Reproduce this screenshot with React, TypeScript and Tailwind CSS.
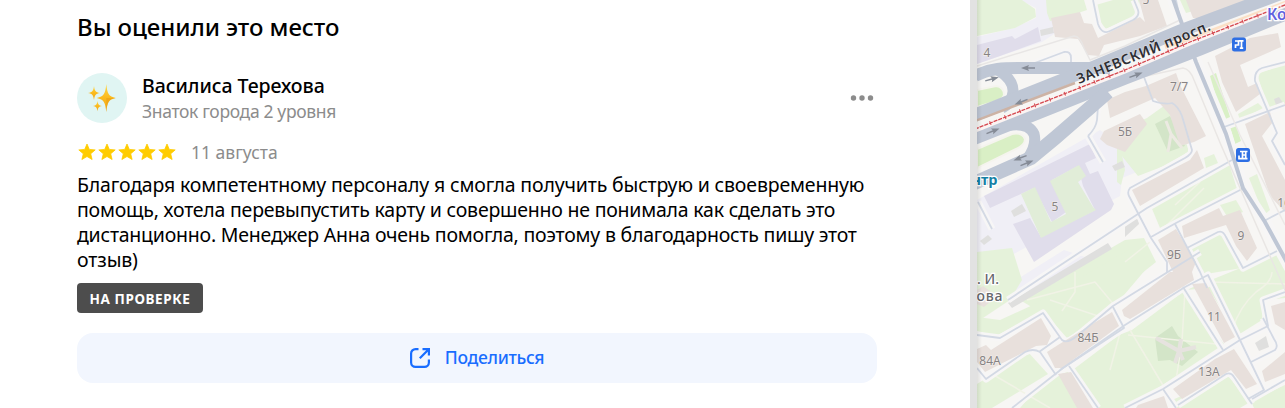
const REVIEW_LINES = [
  { text: "Благодаря компетентному персоналу я смогла получить быструю и своевременную", cls: "tracking-[-0.16px]" },
  { text: "помощь, хотела перевыпустить карту и совершенно не понимала как сделать это", cls: "tracking-[-0.22px]" },
  { text: "дистанционно. Менеджер Анна очень помогла, поэтому в благодарность пишу этот", cls: "tracking-[-0.22px]" },
  { text: "отзыв)", cls: "tracking-[-0.1px]" },
];

const PARKS = [
  // north
  "977,0 1022,0 1035,9 1036,17 1015,28 977,36",
  "1046,0 1084,0 1087,10 1066,17 1050,21 1047,13",
  "1096,5 1113,0 1140,0 1138,14 1106,29 1099,20",
  "1125,23 1138,15 1132,0 1118,0",
  "1180,0 1194,0 1197,10 1186,13",
  "1147,118 1168,103 1188,136 1188,152 1164,166 1138,176 1117,150 1125,128",
  "1257,74 1285,64 1285,104 1270,115",
  "1238,114 1258,103 1263,108 1240,120",
  // middle
  "1150,204 1232,163 1242,187 1160,228",
  "1249,178 1257,174 1270,210 1264,215",
  "1220,205 1236,200 1243,212 1228,218",
  "1204,158 1214,154 1218,163 1206,168",
  "1117,130 1125,170 1121,185 1117,182",
  "1125,240 1144,238 1156,262 1112,297 1080,312 1050,318 1020,300",
  "1188,248 1221,232 1242,268 1200,275",
  "1000,320 1035,304 1130,249 1152,262 1113,308 1067,338 1043,311 996,336 977,331 977,317",
  // south
  "977,252 1012,248 1022,280 1010,300 977,322",
  "977,384 1028,352 1048,374 992,408 977,408",
  "1070,372 1119,335 1132,330 1183,292 1224,344 1158,388 1125,408 1095,408",
  "1186,290 1206,282 1285,250 1285,298 1264,300 1262,320 1238,335 1208,288",
  "1080,408 1068,372 1046,378 1020,408",
  "1172,400 1228,376 1250,402 1240,408 1177,408",
  "1251,401 1285,385 1285,408 1254,408",
];

const BRIGHT_LAWNS = [
  "1210,76 1216,73 1230,117 1223,120",
  "1230,127 1236,125 1241,141 1235,144",
];

const LAVENDER = [
  "977,37 1014,28 1036,18 1036,8 1020,0 1048,0 1052,18 1060,30 1042,42 977,64",
  "977,200 1100,130 1125,150 1120,196 1010,256 977,262",
  "1120,142 1140,128 1152,166 1122,178",
  "1008,285 1064,250 1100,262 1012,306",
];

const SCHOOLS = [
  "977,45 1012,36 1015,39 1038,27 1041,41 1000,56 977,64",
  "984,196 1090,144 1096,158 1085,163 1090,174 1098,171 1114,204 1111,210 1034,262 1013,224 1030,218 1041,237 1095,210 1083,186 1078,166 1052,180 1066,212 1052,222 1034,188 990,208",
];

const COURTYARDS = ["1021,194 1035,187 1051,222 1066,214 1050,181 1079,165 1086,176 1078,182 1093,207 1096,210 1041,238"];

const BUILDINGS = [
  "1051,18 1080,12 1084,23 1092,24 1098,38 1140,17 1145,22 1139,0 1158,0 1167,26 1140,36 1104,45 1099,56 1088,55 1078,39 1055,37",
  "1186,0 1254,0 1201,18 1193,18",
  "1125,92 1146,86 1176,73 1181,87 1206,136 1194,142 1180,146 1170,115 1155,98 1110,118 1107,100",
  "1215,56 1250,38 1278,33 1281,47 1240,65 1248,87 1257,83 1260,94 1236,112 1222,82",
  "1245,124 1270,112 1273,122 1262,136 1285,180 1285,212 1270,196",
  "1107,145 1100,139 1104,131 1140,114 1147,124 1125,152",
  "1132,190 1190,160 1197,150 1204,168 1140,206",
  "1182,226 1219,208 1223,216 1240,210 1257,248 1247,261 1236,246 1226,225 1184,238",
  "1158,240 1176,229 1196,262 1192,272 1173,272",
  "977,290 983,286 997,296 984,307 977,304",
  "977,349 986,345 991,350 1041,318 1051,336 1047,345 1036,346 985,372 977,362",
  "1047,352 1058,345 1112,312 1119,326 1062,368 1055,368",
  "1122,310 1170,272 1192,272 1194,280 1130,319 1124,316",
  "1058,374 1071,372 1093,408 1077,408",
  "1192,284 1206,283 1235,337 1224,343",
  "1173,389 1215,359 1234,349 1257,384 1246,389 1231,370 1182,399",
  "1271,306 1285,302 1285,330 1275,324",
  "1262,371 1285,352 1285,374 1265,382",
  "1138,405 1164,396 1168,408 1136,408",
];

const GREY_BLOCKS = [
  "1040,30 1053,27 1054,33 1041,36",
  "1011,211 1022,204 1026,211 1014,217",
  "980,241 988,235 992,239 984,245",
  "1112,166 1122,161 1125,167 1115,171",
  "1008,303 1108,243 1112,249 1012,308",
  "1255,343 1266,336 1269,347 1259,351",
  "1125,222 1137,214 1139,224 1125,237",
  "1274,99 1279,97 1283,103 1276,105",
];

const DARK_GREEN = [
  "1155,338 1172,326 1178,336 1198,352 1182,366 1170,360 1158,361",
  "1155,124 1170,116 1185,146 1168,152",
];

// narrow service roads between the blocks
const LANES = [
  "M1093 0L1098 24Q1102 35 1110 31L1133 20Q1140 16 1138 10L1134 0",
  "M1032 64L1064 52Q1071 51 1071 58V68",
  "M1144 77L1153 101Q1165 105 1172 103Q1178 106 1182 116L1192 150Q1192 154 1185 158L1130 188Q1127 192 1129 196L1151 238L1167 262V272",
  "M1088 136L1103 162",
  "M1232 160L1147 208L1050 272L1008 300",
  "M1244 188L1176 223L1151 237",
  "M1175 224L1200 272L1207 288",
  "M1187 248L1218 232Q1223 230 1226 237L1243 268L1277 251",
  "M1264 221L1285 210",
  "M1285 62L1262 68Q1254 71 1255 81L1277 133L1272 141L1285 165",
  "M1224 127L1285 105",
  "M978 202L992 229",
  "M977 335L1000 338L1043 313L1062 340Q1067 344 1077 336L1113 306L1200 252",
  "M1113 307L1124 328L1063 368L1012 408",
  "M977 368L986 379L1025 352Q1033 348 1040 352L1056 375",
  "M1039 352L1060 337",
  "M1069 366L1098 408",
  "M1060 370L1125 325L1185 287L1208 275L1240 340",
  "M1183 287L1223 350",
  "M1125 408L1163 389L1240 340L1268 326L1263 300L1285 292",
  "M1163 389L1176 408",
  "M1178 405L1226 374Q1231 372 1234 377L1252 404",
  "M1240 340L1264 390L1248 399",
  "M1252 399L1285 380",
  "M1251 362L1275 350Q1279 346 1274 339L1263 318",
  "M1183 33L1176 0",
  "M1108 95L1098 106L1097 120Q1096 128 1088 136",
];

const FOOTPATHS = [
  "M1204 188L1160 232",
  "M1175 205L1200 182",
  "M1125 325L1050 300",
  "M1062 311L1075 292V272",
  "M1027 300L1095 282L1115 306",
  "M1110 370L1120 333",
  "M992 374L1050 408",
  "M1130 330L1167 392",
  "M1185 290L1182 342L1176 380",
  "M1128 335L1216 344",
  "M1210 282L1285 284",
  "M1232 330Q1240 306 1256 292Q1272 282 1272 272",
  "M1125 262L1155 238",
  "M1204 90L1224 130",
];

const ARROWS = [
  { x: 1028, y: 68, r: 180 },
  { x: 992, y: 79, r: -15 },
  { x: 1021, y: 102, r: 158 },
  { x: 993, y: 131, r: -22 },
  { x: 1020, y: 158, r: 160 },
  { x: 1027, y: 163, r: -22 },
  { x: 1136, y: 75, r: -20 },
];

const HOUSES = [
  { x: 987, y: 57, n: "4" },
  { x: 1146, y: 4, n: "5" },
  { x: 1179, y: 91, n: "7/7" },
  { x: 1125, y: 136, n: "5Б" },
  { x: 1055, y: 211, n: "5" },
  { x: 1284, y: 207, n: "16" },
  { x: 1241, y: 240, n: "9" },
  { x: 1174, y: 259, n: "9Б" },
  { x: 1214, y: 321, n: "11" },
  { x: 1088, y: 342, n: "84Б" },
  { x: 990, y: 365, n: "84А" },
  { x: 1209, y: 376, n: "13А" },
];

function Polys({ items, fill }: { items: string[]; fill: string }) {
  return (
    <g fill={fill}>
      {items.map((p) => (
        <polygon key={p} points={p} />
      ))}
    </g>
  );
}

function Stop({ x, y, d }: { x: number; y: number; d: string }) {
  return (
    <g transform={`translate(${x} ${y})`}>
      <rect width="14" height="14" rx="2.5" fill="#2e6fe4" />
      <path d={d} fill="none" stroke="#fff" strokeWidth="1.7" />
    </g>
  );
}

function CityMap() {
  return (
    <svg className="block h-full w-full" viewBox="977 0 308 408" fontFamily='"Noto Sans", sans-serif'>
      <defs>
        <linearGradient id="edge">
          <stop offset="0" stopColor="#000" stopOpacity=".09" />
          <stop offset="1" stopColor="#000" stopOpacity="0" />
        </linearGradient>
      </defs>
      <rect x="977" width="308" height="408" fill="#f7f6f4" />
      <Polys items={LAVENDER} fill="#f0eff6" />
      <Polys items={PARKS} fill="#e5f2da" />
      <Polys items={BRIGHT_LAWNS} fill="#d9f0c6" />
      <Polys items={DARK_GREEN} fill="#d3e5c8" />
      <Polys items={GREY_BLOCKS} fill="#dfdfde" />
      <Polys items={SCHOOLS} fill="#e0ddeb" />
      <Polys items={COURTYARDS} fill="#e1edd8" />

      <g fill="none" strokeLinejoin="round">
        {FOOTPATHS.map((d) => (
          <path key={d} d={d} stroke="#f1f3e6" strokeWidth="1.5" />
        ))}
        {LANES.map((d) => (
          <path key={d} d={d} stroke="#f7f6f6" strokeWidth="7" />
        ))}
        <path d="M1172 -4L1187 38L1196 62L1226 134L1243 188L1265 222L1290 268" stroke="#f7f6f6" strokeWidth="12" />
      </g>
      <Polys items={BUILDINGS} fill="#e8e0dc" />
      <g fill="none" strokeLinejoin="round">
        {LANES.map((d) => (
          <path key={d} d={d} stroke="#d3d9e4" strokeWidth="1.8" />
        ))}
        <path d="M977 66L1074 36Q1080 36 1084 48L1090 60L1125 46L1180 20" stroke="#e8e6e5" strokeWidth="1.5" />
        <path d="M1137 78L1183 68Q1190 69 1194 80L1221 145L1285 290" stroke="#e9e6e4" strokeWidth="1.5" />
        <path d="M1208 62L1240 135L1285 225" stroke="#ece9e7" strokeWidth="1.5" />
        <path d="M1156 338L1179 351L1196 347M1181 339L1179 351L1183 360M1179 351L1175 363" stroke="#e6e3df" strokeWidth="4" />
        <path d="M1166 121L1171 134L1168 152M1171 134L1182 148" stroke="#eceae2" strokeWidth="3" />
      </g>

      {/* lawns inside the turning loops */}
      <path d="M977 90L996 86Q1004 87 1004 95Q1002 100 994 102L977 107Z" fill="#d9efc5" stroke="#f5f4ee" strokeWidth="2" />
      <path d="M977 149L1012 134Q1022 132 1025 139Q1025 145 1016 149L977 168Z" fill="#d9efc5" stroke="#f5f4ee" strokeWidth="2" />

      <g fill="none" stroke="#bfc7d5">
        <path d="M1172 -4L1187 38L1196 62L1226 134L1243 188L1265 222L1290 268" strokeWidth="4" />
        <path d="M975 76C990 68 1005 68 1020 68H1110" strokeWidth="12" />
        <path d="M998 70Q1014 80 1013 92Q1012 103 1002 108" strokeWidth="11" />
        <path d="M970 117L1075 75L1180 31L1290 -10" strokeWidth="13" />
        <path d="M970 139L1125 77L1200 48L1290 11" strokeWidth="15" />
        <path d="M1000 127Q1028 120 1034 134Q1037 145 1028 158" strokeWidth="11" />
        <path d="M970 185L1031 158L1055 138L1108 92" strokeWidth="14" />
      </g>
      <path d="M975 121L1075 83" stroke="#cdb3a5" strokeWidth="2.5" />
      <path d="M1165 47L1195 37L1290 1" stroke="#fbe0c6" strokeWidth="4" fill="none" />
      <path d="M975 130L1125 71L1190 43L1290 3" stroke="#fbf4f3" strokeWidth="5" fill="none" />
      <path d="M975 129L1125 70L1190 42L1290 3" stroke="#d5484f" strokeWidth="1.3" strokeDasharray="4 1" fill="none" />
      <path d="M975 129L1125 70L1190 42L1290 3" stroke="#d5484f" strokeWidth="4" strokeDasharray="1 15" fill="none" />

      {ARROWS.map((a) => (
        <path
          key={`${a.x}-${a.y}`}
          transform={`translate(${a.x} ${a.y}) rotate(${a.r})`}
          d="M-7 -.7H0L-1 -3L7 0L-1 3L0 .7H-7Z"
          fill="#858b96"
        />
      ))}

      <g fontSize="12" fill="#878384" stroke="#f3efec" strokeWidth="1.2" paintOrder="stroke" textAnchor="middle">
        {HOUSES.map((h) => (
          <text key={`${h.x}-${h.y}`} x={h.x} y={h.y}>
            {h.n}
          </text>
        ))}
      </g>
      <text
        transform="translate(1079 84) rotate(-22.3)"
        fontSize="14"
        fontWeight="600"
        textLength="143"
        fill="#2e2e33"
        stroke="#fff"
        strokeOpacity=".4"
        strokeWidth="1.2"
        paintOrder="stroke"
      >
        ЗАНЕВСКИЙ просп.
      </text>
      <g paintOrder="stroke" stroke="#fff" strokeWidth="2.5">
        <text x="1267" y="19.5" fontSize="15.5" fontWeight="600" fill="#5f62df">
          Ко
        </text>
        <text x="997.5" y="185" fontSize="14.5" fontWeight="700" fill="#1580a5" textAnchor="end">
          нтр
        </text>
        <g fontSize="14" fontWeight="500" fill="#66676b">
          <text x="977" y="284">. И.</text>
          <text x="976.5" y="300.500" textLength="26">ова</text>
        </g>
      </g>

      <Stop x={1232} y={37.5} d="M3 3.500H6.500V7.500H3.500V10.500M6.500 3.300H11.500M9.500 3.300V10.700M7.800 10.700H11.200" />
      <Stop x={1236} y={148} d="M4 3.500H11.500M6.500 7H9.500M3 7.500V10.700H11.500M6.500 3.500V10.500M9.700 3.500V10.500" />
      <rect x="977" width="5" height="408" fill="url(#edge)" />
    </svg>
  );
}

function Sparkles() {
  return (
    <svg className="size-[30px]" viewBox="0 0 30 30">
      <defs>
        <linearGradient id="gold" x1="0" y1="0" x2="0" y2="1">
          <stop offset="0" stopColor="#ffd84a" />
          <stop offset=".5" stopColor="#fbb91d" />
          <stop offset="1" stopColor="#eea81a" />
        </linearGradient>
      </defs>
      <g fill="url(#gold)">
        <path d="M19.300 1C20.300 10.500 21.500 13.500 28.800 15C21.500 16.500 20.300 19.500 19.300 29C18.300 19.500 17 16.500 9.800 15C17 13.500 18.300 10.500 19.300 1Z" />
        <path d="M7 3C7.600 7.700 8.500 9.200 13 10C8.500 10.800 7.600 12.300 7 17C6.400 12.300 5.500 10.800 1 10C5.500 9.200 6.400 7.700 7 3Z" />
        <path d="M10.500 17.700C11 21.200 11.700 22.500 15 23C11.700 23.500 11 24.800 10.500 28.300C10 24.800 9.300 23.500 6 23C9.300 22.500 10 21.200 10.500 17.700Z" />
      </g>
      <path d="M19.300 15L28.500 15C22 16 20.500 18 19.300 29Z" fill="#e89a12" opacity=".55" />
    </svg>
  );
}

function Star() {
  return (
    <svg className="size-5" viewBox="0 0 20 20">
      <path
        d="M10 2L12.300 7.400L18.200 7.900L13.700 11.800L15.100 17.500L10 14.500L4.900 17.500L6.300 11.800L1.800 7.900L7.700 7.400Z"
        fill="#fc0"
        stroke="#fc0"
        strokeWidth=".8"
        strokeLinejoin="round"
      />
    </svg>
  );
}

export default function App() {
  return (
    <main className="flex h-[408px] w-[1285px] overflow-hidden bg-white font-['Noto_Sans',sans-serif] text-black">
      <section className="w-[970px] shrink-0 pt-[11px] pl-[77px]">
        <div className="w-[800px]">
          <h2 className="mb-[30px] text-2xl leading-8 font-medium tracking-[-0.07px]">Вы оценили это место</h2>

          <div className="flex h-[50px] items-center">
            <div className="flex size-[50px] items-center justify-center rounded-full bg-[#e0f5f3]">
              <Sparkles />
            </div>
            <div className="ml-[15px] flex-1 self-start leading-[26px] whitespace-nowrap">
              <div className="text-[19.5px] font-medium tracking-[-0.06px]">Василиса Терехова</div>
              <div className="-mt-px text-[17.5px] tracking-[-0.34px] text-[#8c8c8c]">Знаток города 2 уровня</div>
            </div>
            <button className="mr-0.5 p-0">
              <svg className="h-6 w-[26px]" viewBox="0 0 26 24" fill="#8c8c8c">
                <circle cx="4.5" cy="12" r="2.7" />
                <circle cx="13" cy="12" r="2.7" />
                <circle cx="21.5" cy="12" r="2.7" />
              </svg>
            </button>
          </div>

          <div className="mt-[17px] flex h-6 items-center">
            <div className="flex">
              {[1, 2, 3, 4, 5].map((n) => (
                <Star key={n} />
              ))}
            </div>
            <span className="ml-3.5 text-[17.5px] leading-6 text-[#8c8c8c]">11 августа</span>
          </div>

          <div className="mt-2 text-[19.5px] leading-[25px] whitespace-nowrap">
            {REVIEW_LINES.map((l) => (
              <div key={l.text} className={l.cls}>
                {l.text}
              </div>
            ))}
          </div>

          <div className="mt-[11px] flex h-[30px] w-[126px] items-center justify-center rounded bg-[#4d4d4d] pt-0.5 text-[13.5px] font-bold tracking-[0.6px] whitespace-nowrap text-white">
            НА ПРОВЕРКЕ
          </div>

          <button className="mt-5 flex h-[50px] w-full items-center justify-center gap-[15px] rounded-2xl bg-[#f2f6fe] text-[#196dff]">
            <svg className="size-5" viewBox="0 0 20 20" fill="none" stroke="currentColor" strokeWidth="2.2">
              <path d="M8.500 1.100H5.500A4.400 4.400 0 0 0 1.100 5.500V14.500A4.400 4.400 0 0 0 5.500 18.900H14.500A4.400 4.400 0 0 0 18.900 14.500V11.500" />
              <path d="M9.800 10.200L18.500 1.500M12.500 1.100H18.900V7.500" />
            </svg>
            <span className="pb-0.5 text-[17.5px] leading-6 font-medium tracking-[-0.32px]">Поделиться</span>
          </button>
        </div>
      </section>

      <div className="w-[7px] shrink-0 bg-[#e2e2e2]" />

      <aside className="w-[308px] shrink-0">
        <CityMap />
      </aside>
    </main>
  );
}
